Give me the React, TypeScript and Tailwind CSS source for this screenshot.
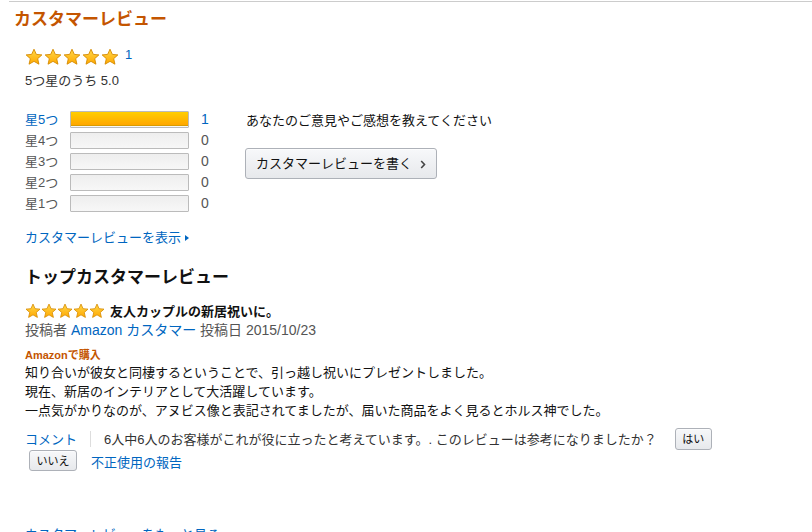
import React from 'react';

const Star: React.FC<{ size: number }> = ({ size }) => (
  <svg width={size} height={size} viewBox="0 0 24 24" className="block">
    <defs>
      <linearGradient id="sg" x1="0" y1="0" x2="0" y2="1">
        <stop offset="0" stopColor="#ffd84a" />
        <stop offset="1" stopColor="#ffa800" />
      </linearGradient>
    </defs>
    <path
      d="M12 1.6l3.1 6.9 7.4.7-5.6 5 1.7 7.4L12 17.8l-6.6 3.8 1.7-7.4-5.6-5 7.4-.7z"
      fill="url(#sg)"
      stroke="#d58a00"
      strokeWidth="1.2"
      strokeLinejoin="round"
    />
  </svg>
);

const Stars: React.FC<{ size: number; gap: string }> = ({ size, gap }) => (
  <div className={`flex ${gap}`}>
    {[0, 1, 2, 3, 4].map(i => (
      <Star key={i} size={size} />
    ))}
  </div>
);

const rows = [
  { label: '星5つ', pct: 100, count: 1, active: true },
  { label: '星4つ', pct: 0, count: 0, active: false },
  { label: '星3つ', pct: 0, count: 0, active: false },
  { label: '星2つ', pct: 0, count: 0, active: false },
  { label: '星1つ', pct: 0, count: 0, active: false },
];

const HistRow: React.FC<{ label: string; pct: number; count: number; active: boolean }> = ({ label, pct, count, active }) => (
  <div className="flex items-center h-[21px]">
    <span className={`w-[45px] text-[13px] ${active ? 'text-[#0066c0]' : 'text-[#555]'}`}>{label}</span>
    <div className="w-[119px] h-[17px] border border-[#bbb] bg-gradient-to-b from-[#eee] to-[#f7f7f7] rounded-[1px] overflow-hidden">
      {pct > 0 && (
        <div
          className="h-full bg-gradient-to-b from-[#ffce00] to-[#ffa700] border border-[#d99c00] -m-px"
          style={{ width: `calc(${pct}% + 2px)` }}
        />
      )}
    </div>
    <span className={`ml-[12px] text-[14px] ${active ? 'text-[#0066c0]' : 'text-[#555]'}`}>{count}</span>
  </div>
);

const GrayButton: React.FC<{ children: React.ReactNode; className?: string }> = ({ children, className }) => (
  <button className={`border border-[#adb1b8] rounded-[3px] bg-gradient-to-b from-[#f7f8fa] to-[#e7e9ec] text-[#111] shadow-[0_1px_0_rgba(255,255,255,.6)_inset] ${className ?? ''}`}>
    {children}
  </button>
);

export default function App() {
  return (
    <div className="w-[812px] h-[532px] overflow-hidden bg-white text-[#111] font-['Liberation_Sans','Noto_Sans_CJK_JP',sans-serif]">
      <div className="ml-[9px] border-t border-[#ccc] mt-px pt-[7px] pl-[5px]">
        <h2 className="text-[17px] font-bold text-[#c45500] leading-[22px]">カスタマーレビュー</h2>

        <div className="pl-[11px]">
          <div className="mt-[17px] flex items-center gap-[6px]">
            <Stars size={18} gap="gap-px" />
            <span className="text-[13px] text-[#0066c0] -mt-[4px]">1</span>
          </div>
          <div className="text-[13px] text-[#333] mt-[6px] leading-[18px]">5つ星のうち 5.0</div>

          <div className="flex mt-[19px]">
            <div className="w-[221px] flex flex-col">
              {rows.map(r => (
                <HistRow key={r.label} {...r} />
              ))}
            </div>
            <div className="pt-[3px]">
              <div className="text-[13px] text-[#111] leading-[18px]">あなたのご意見やご感想を教えてください</div>
              <GrayButton className="mt-[18px] h-[31px] w-[192px] text-[13px] flex items-center justify-center gap-[8px] -ml-px">
                <span>カスタマーレビューを書く</span>
                <svg width="6" height="9" viewBox="0 0 6 9" className="mt-px">
                  <path d="M1.2 1l3.3 3.5L1.2 8" fill="none" stroke="#444" strokeWidth="1.6" />
                </svg>
              </GrayButton>
            </div>
          </div>

          <div className="mt-[14px] text-[13px] text-[#0066c0] flex items-center gap-[4px]">
            <span>カスタマーレビューを表示</span>
            <span className="w-0 h-0 border-y-[3px] border-y-transparent border-l-[4px] border-l-[#0066c0]" />
          </div>

          <h3 className="mt-[18px] text-[17px] font-bold leading-[24px]">トップカスタマーレビュー</h3>

          <div className="mt-[12px] flex items-center gap-[5px]">
            <Stars size={16} gap="gap-[0px]" />
            <span className="text-[13px] font-bold">友人カップルの新居祝いに。</span>
          </div>
          <div className="text-[14px] text-[#555] -mt-px leading-[20px]">
            投稿者 <span className="text-[#0066c0]">Amazon カスタマー</span> 投稿日 2015/10/23
          </div>
          <div className="text-[11px] font-bold text-[#c45500] mt-[8px] leading-[14px]">Amazonで購入</div>
          <div className="text-[13px] leading-[19px] text-[#111] mt-px">
            <p>知り合いが彼女と同棲するということで、引っ越し祝いにプレゼントしました。</p>
            <p>現在、新居のインテリアとして大活躍しています。</p>
            <p>一点気がかりなのが、アヌビス像と表記されてましたが、届いた商品をよく見るとホルス神でした。</p>
          </div>

          <div className="mt-[8px] text-[13px] leading-[21px] flex flex-wrap items-center">
            <span className="text-[#0066c0]">コメント</span>
            <span className="mx-[13px] h-[16px] border-l border-[#ddd]" />
            <span className="text-[#333]">6人中6人のお客様がこれが役に立ったと考えています。. このレビューは参考になりましたか？</span>
            <GrayButton className="ml-[18px] h-[22px] w-[37px] text-[11px]">はい</GrayButton>
          </div>
          <div className="flex items-center -mt-[1px]">
            <GrayButton className="ml-[4px] h-[21px] w-[48px] text-[11px]">いいえ</GrayButton>
            <span className="ml-[14px] text-[13px] text-[#0066c0] mt-[4px]">不正使用の報告</span>
          </div>

          <div className="mt-[52px] text-[13px] text-[#0066c0]">カスタマーレビューをもっと見る</div>
        </div>
      </div>
    </div>
  );
}
